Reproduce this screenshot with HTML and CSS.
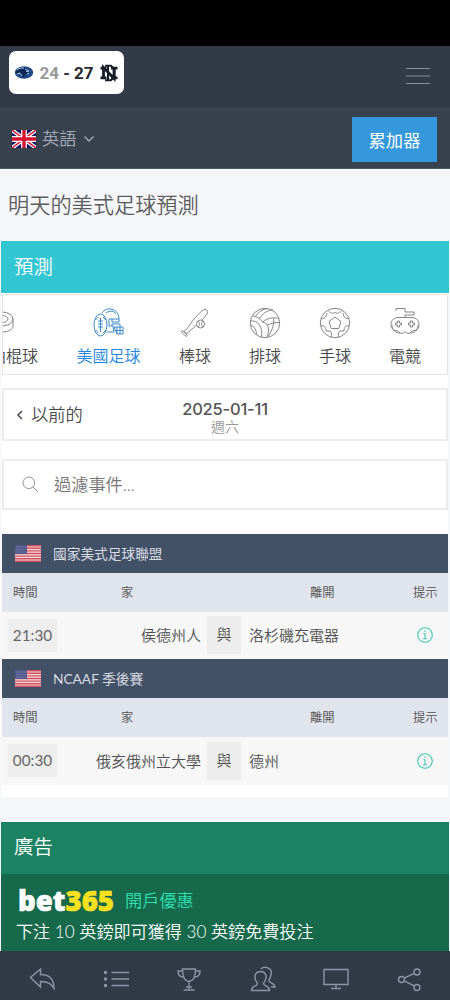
FILE: index.html
```
<!DOCTYPE html>
<html lang="zh-Hant">
<head>
<meta charset="utf-8">
<title>明天的美式足球預測</title>
<link rel="stylesheet" href="styles.css">
</head>
<body>
<svg class="defs" width="0" height="0">
  <symbol id="us" viewBox="0 0 26 17">
    <rect width="26" height="17" fill="#efdde2"/>
    <path d="M0 .7h26M0 3.3h26M0 5.9h26M0 8.5h26M0 11.1h26M0 13.7h26M0 16.3h26" stroke="#d64c5c" stroke-width="1.4"/>
    <rect width="12" height="9" fill="#535a8c"/>
    <path d="M1 2h10M2 4.5h9M1 7h10" stroke="#9195b8" stroke-width=".8" stroke-dasharray="1 1.2"/>
  </symbol>
  <symbol id="info" viewBox="0 0 18 18">
    <g fill="none" stroke="#43c3b0" stroke-width="1.1"><circle cx="9" cy="9" r="7.3"/><path d="M7.3 7.7H9v5M7 12.8h4M8.2 5.1h1.4"/></g>
  </symbol>
</svg>
<div class="screen">
  <div class="status"></div>
  <header class="top">
    <div class="score">
      <svg width="20" height="15" viewBox="0 0 20 15"><ellipse cx="10" cy="7.5" rx="9.2" ry="6.2" fill="#1e4b85"/><path d="M2 6c3-4 7-4 10-3l3 2-2 1 3 2-4 1-2 3-3-1-2-3-3 1z" fill="#0b2858"/><path d="M3 5c2-2 4-2 7-2M11 4l4 2-3 .5M3 9l3-1 2 3M13 9l2-1" fill="none" stroke="#b7d2ee" stroke-width="1"/></svg>
      <span><i>24</i> - 27</span>
      <svg width="20" height="18" viewBox="0 0 20 18" fill="none" stroke="#171c27" stroke-width="2.8"><path d="M4.500 15V3.500l10.500 11V3M1.500 4.200h6M12 4.200h6.500M1.500 13.800h6M12 13.800h6.500"/><path d="M6 1.800h6l3.500 3.500v7.400L12 16.200H6M9 2v14" stroke-width="2"/></svg>
    </div>
    <svg class="burger" width="26" height="18" viewBox="0 0 26 18" stroke="#8a919e" stroke-width="1.2"><path d="M1 1.500h24M1 9h24M1 16.500h24"/></svg>
  </header>
  <div class="sub">
    <div class="lang">
      <svg width="24" height="18" viewBox="0 0 25 18" preserveAspectRatio="none"><rect width="25" height="18" fill="#10145f"/><path d="M0 0l25 18M25 0L0 18" stroke="#fff" stroke-width="4"/><path d="M0 0l25 18M25 0L0 18" stroke="#d91f3c" stroke-width="1.5"/><path d="M12.500 0v18M0 9h25" stroke="#fff" stroke-width="6"/><path d="M12.500 0v18M0 9h25" stroke="#d3132f" stroke-width="3.500"/></svg>
      <span>英語</span>
      <svg width="12" height="8" viewBox="0 0 12 8" fill="none" stroke="#a4abb7" stroke-width="1.4"><path d="M1.500 1.500L6 6l4.500-4.500"/></svg>
    </div>
    <button class="acca">累加器</button>
  </div>
  <h1 class="title">明天的美式足球預測</h1>
  <section class="panel">
    <h2 class="bar">預測</h2>
    <nav class="sports">
      <a class="sport hockey"><svg width="32" height="32" viewBox="0 0 32 32"><ellipse cx="15" cy="12" rx="11" ry="7"/><path d="M4 12v7c0 8 22 8 22 0v-7"/><ellipse cx="15" cy="12" rx="6" ry="3.500"/></svg>曲棍球</a>
      <a class="sport wide on"><svg width="32" height="32" viewBox="0 0 32 32"><ellipse cx="7.500" cy="18" rx="6.500" ry="11"/><path d="M7.500 11v14M5 14h5M5 17h5M5 20h5M2.500 13l3-3M10 26l3-3M2.500 23l3 3M10 10l3 3M9 6C13-1 26 1 26 12H16v7h4l1 6h-7M19 12v3h7v-3M19 19v-2h8v3M21 20h9v7h-6zM24 20v7M27 20v7M22 23.500h8M13 6c4-3 8-2 10 1"/></svg>美國足球</a>
      <a class="sport"><svg width="32" height="32" viewBox="0 0 32 32"><path d="M5 24.500C11 20 11 14 24 3c3-2 6 1 4 4C20 18 14 20 7.500 27zM3.500 23.500l5 5-1.500 1-5-5z"/><circle cx="21.500" cy="17" r="4" fill="#fff"/><path d="M19 14.200c2 1 2 4 0 6M24 14.200c-2 1-2 4 0 6"/></svg>棒球</a>
      <a class="sport"><svg width="32" height="32" viewBox="0 0 32 32"><circle cx="16" cy="16" r="14.700"/><path d="M13.500 15C18 11 24 10 30 11.500M13.500 15C11 11 6 9 3.500 9M13.500 15c7 1 7 9 4.500 15.500M10 12c3-5 8-9 14-9M6.500 9.500C9 5 14 2 19 1.500M18.500 18c4-2 8-2.500 12-2.500M1.500 14c4-.5 7 1 9 4M10.500 18c2 3 2.500 7 2 12M1.500 18c4 1 6 5 6 10M24.500 11c1 5-1 12-5 18"/></svg>排球</a>
      <a class="sport"><svg width="32" height="32" viewBox="0 0 32 32"><circle cx="16" cy="16" r="14.700"/><path d="M16 10l6 4.500-2.200 7h-7.600l-2.200-7zM9 3.200c2 3 5 3.800 7 2.200 2 1.600 5 .8 7-2.200M2 11c3 1 5 0 6-5M30 11c-3 1-5 0-6-5M2 19c3-1 5 1 5 5l4 0c2 2 2 4 1 6.500M30 19c-3-1-5 1-5 5h-4c-2 2-2 4-1 6.500"/></svg>手球</a>
      <a class="sport"><svg width="32" height="32" viewBox="0 0 32 32"><path d="M7 4V1.500h9v3.500h9v3h-9v2.500M9 10.500h14c9 0 9 13 2 13-3 0-3 3-6 3-1.500 0-1.500-1.500-3-1.500s-1.500 1.500-3 1.500c-3 0-3-3-6-3-7 0-7-13 2-13zM3 18c0 6 4 8 8 8M29 18c0 6-4 8-8 8"/><path d="M8.500 14h2v2h2v2h-2v2h-2v-2h-2v-2h2zM21.500 14h2v2h2v2h-2v2h-2v-2h-2v-2h2z"/></svg>電競</a>
    </nav>
    <div class="datebox">
      <a class="prev"><svg width="8" height="12" viewBox="0 0 8 12" fill="none" stroke="#4c4c4c" stroke-width="1.500"><path d="M6 2L2 6l4 4"/></svg>以前的</a>
      <div class="date"><b>2025-01-11</b><small>週六</small></div>
      <span></span>
    </div>
    <div class="filter"><svg width="17" height="17" viewBox="0 0 17 17" fill="none" stroke="#969696"><circle cx="6.800" cy="6.800" r="5.800"/><path d="M11 11l5 5"/></svg><span>過濾事件...</span></div>
    <div class="league"><svg width="26" height="17"><use href="#us"/></svg><span>國家美式足球聯盟</span></div>
    <div class="row head"><span>時間</span><span>家</span><span></span><span class="away">離開</span><span>提示</span></div>
    <div class="row match"><time>21:30</time><span class="home">侯德州人</span><span class="vs">與</span><span>洛杉磯充電器</span><svg width="18" height="18"><use href="#info"/></svg></div>
    <div class="league"><svg width="26" height="17"><use href="#us"/></svg><span>NCAAF 季後賽</span></div>
    <div class="row head"><span>時間</span><span>家</span><span></span><span class="away">離開</span><span>提示</span></div>
    <div class="row match last"><time>00:30</time><span class="home">俄亥俄州立大學</span><span class="vs">與</span><span>德州</span><svg width="18" height="18"><use href="#info"/></svg></div>
  </section>
  <section class="ad">
    <h2 class="bar">廣告</h2>
    <div class="offer">
      <div class="brand"><svg width="98" height="40"><text class="logo" x="0" y="30" textLength="96" lengthAdjust="spacingAndGlyphs">bet<tspan>365</tspan></text></svg><span>開戶優惠</span></div>
      <p>下注 10 英鎊即可獲得 30 英鎊免費投注</p>
    </div>
  </section>
  <footer class="tabs">
    <svg viewBox="0 0 28 28"><path d="M2.500 12.500L12.500 4v5.500c9 0 13.500 5 13.500 14-3-5-6-7-13.500-7V22z"/></svg>
    <svg viewBox="0 0 28 28"><path d="M9.500 7.500H27M9.500 14H27M9.500 20.500H27"/><path d="M3.500 7.500h.01M3.500 14h.01M3.500 20.500h.01" stroke-width="3.400" stroke-linecap="round"/></svg>
    <svg viewBox="0 0 28 28"><path d="M7.500 4h13c0 8-2 12-6.500 12.500C9.500 16 7.500 12 7.500 4zM7.500 6H3c0 4 1.500 6 5.500 6M20.500 6H25c0 4-1.500 6-5.500 6M14 16.500V24M11 22h6M8.500 25h11"/></svg>
    <svg viewBox="0 0 28 28"><path d="M2.500 25.500c0-5 6-4 6-7-5-7-2-12 3-12s8 5 3 12c0 3 6 2 6 7zM12 4c3-3 12-2 10 6-.5 3-2 4-2 6s6 2 6 6h-4"/></svg>
    <svg viewBox="0 0 28 28"><path d="M2 4.500h24v15H2zM14 19.500v4M9 23.500h10"/></svg>
    <svg viewBox="0 0 28 28"><circle cx="5.500" cy="14.500" r="3"/><circle cx="21" cy="7" r="3"/><circle cx="21" cy="22.500" r="3"/><path d="M8.200 13.200l10-4.800M8.200 15.900l10 5"/></svg>
  </footer>
</div>
</body>
</html>
```
FILE: styles.css
```
* { box-sizing: border-box; }
body { margin: 0; font-family: Lato, "Noto Sans CJK TC", sans-serif; font-weight: 350; color: #555; }
h1, h2, p { margin: 0; font-weight: 350; }
.defs { position: absolute; }
.screen { width: 450px; height: 1000px; display: flex; flex-direction: column; background: #f4f6fa; overflow: hidden; }
.status { height: 46px; background: #000; }
.top { height: 61px; background: #323a47; display: flex; justify-content: space-between; align-items: flex-start; padding: 5px 19px 0 9px; }
.score { width: 115px; height: 43px; border-radius: 7px; background: #fff; display: flex; align-items: center; justify-content: space-between; padding: 0 5px; font: bold 17px Roboto, sans-serif; color: #26292e; }
.score span { white-space: pre; }
.score i { font-style: normal; color: #999; }
.burger { margin-top: 16px; }
.sub { height: 62px; background: #38424f; display: flex; justify-content: space-between; align-items: center; padding: 2px 13px 0 12px; border-bottom: 1px solid #525b67; }
.lang { display: flex; align-items: center; gap: 6px; font-size: 17.3px; line-height: 24px; color: #a4abb7; }
.acca { width: 85px; height: 45px; margin-top: 2px; border: 0; padding: 0; background: #3598dc; color: #fff; font: 400 17.3px Lato, "Noto Sans CJK TC", sans-serif; }
.title { height: 72px; padding-left: 8px; font-size: 21.2px; line-height: 72px; color: #5c5c5c; }
.panel { height: 556px; margin: 0 2px 0 1px; background: #fff; }
.bar { height: 52px; padding-left: 13px; line-height: 52px; font-size: 19.4px; color: #fff; background: #32c5d2; }
.panel .bar { margin-right: -1px; }
.sports { height: 81px; margin: 1px 0 13px 1px; border: 1px solid #e5e5e5; display: flex; overflow: hidden; padding-left: 38px; }
.sport { flex: 0 0 70px; display: flex; flex-direction: column; align-items: center; padding-top: 12px; font-size: 16px; line-height: 24px; color: #494949; gap: 5px; white-space: nowrap; }
.sport svg { fill: none; stroke: #858585; stroke-width: 1; }
.hockey { flex-basis: 76px; margin-left: -65px; }
.hockey svg { margin-left: -23px; }
.wide { flex-basis: 101px; margin-left: 6px; }
.wide + .sport { margin-left: 1px; }
.on { color: #2585dc; }
.on svg { stroke: #3c88c8; }
.datebox { height: 53px; margin: 0 0 18px 1px; border: 2px solid #ececec; display: grid; grid-template-columns: 1fr auto 1fr; align-items: center; padding: 0 12px; }
.prev { display: flex; align-items: center; gap: 7px; font-size: 17.3px; line-height: 24px; color: #4c4c4c; }
.date { display: flex; flex-direction: column; align-items: center; padding-top: 6px; }
.date b { font-weight: 500; font-size: 16.5px; line-height: 18px; color: #555; font-family: Inter, sans-serif; letter-spacing: -.2px; }
.date small { font-size: 14px; line-height: 17px; color: #999; }
.filter { height: 51px; margin: 0 0 24px 1px; border: 2px solid #ececec; display: flex; align-items: center; gap: 15px; padding: 0 0 1px 18px; font-size: 17.2px; color: #777; }
.filter span { padding-bottom: 2px; }
.league { height: 39px; margin-left: 1px; background: #435167; color: #d8dce2; display: flex; align-items: center; gap: 12px; padding-left: 13px; font-size: 13.700px; font-weight: 400; }
.league span { padding-bottom: 2px; }
.row { display: grid; grid-template-columns: 50px 148px 35px 161px 1fr; align-items: center; margin-left: 1px; padding-left: 6px; }
.head { height: 39px; padding-bottom: 2px; background: #e0e5ed; font-size: 12.3px; color: #505050; }
.head span:first-child { padding-left: 5px; }
.head span:nth-child(2) { padding-left: 63px; }
.head .away { padding-left: 69px; }
.head span:last-child { padding-left: 11px; }
.match { height: 47px; padding-bottom: 1px; background: #f7f7f7; font-size: 15px; color: #505050; }
.match.last { height: 48px; }
.match time { width: 49px; height: 33px; line-height: 33px; text-align: center; background: #eee; font-family: Lato, sans-serif; font-weight: 400; color: #666; font-size: 15.3px; }
.home { text-align: right; padding: 0 5px 1px 0; }
.vs { height: 38px; line-height: 36px; margin-left: 1px; text-align: center; background: #ededed; }
.vs + span { padding: 0 0 1px 8px; }
.match svg { margin-left: 14px; }
.ad { margin: 25px 1px 0; }
.ad .bar { background: #1c8362; line-height: 50px; }
.offer { height: 77px; background: #16694b; padding: 13px 0 0 15px; color: #fff; }
.brand { display: flex; align-items: center; height: 27px; gap: 9px; padding-left: 2px; font-size: 17.2px; line-height: 24px; color: #2fdfb0; }
.logo { font: 900 28px "Noto Sans", "Open Sans", sans-serif; fill: #fff; stroke: #fff; stroke-width: .6; }
.logo tspan { fill: #fbe01d; stroke: #fbe01d; }
.offer p { font-size: 17.1px; line-height: 36px; white-space: nowrap; }
.tabs { height: 49px; flex: none; background: #323a47; display: flex; justify-content: space-between; padding: 14px 26px 0 28px; }
.tabs svg { width: 28px; height: 28px; fill: none; stroke: #8c96a7; stroke-width: 1.4; }
```
